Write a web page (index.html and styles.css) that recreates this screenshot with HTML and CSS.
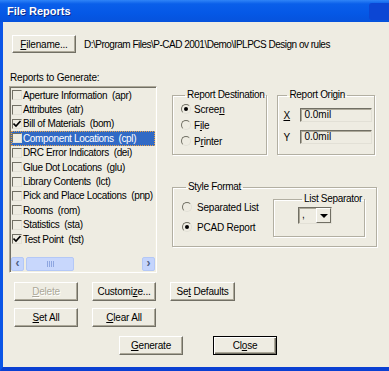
FILE: index.html
```html
<!DOCTYPE html>
<html lang="en">
<head>
  <meta charset="UTF-8">
  <title>File Reports</title>
  <link rel="stylesheet" href="styles.css">
</head>
<body>

  <div class="window">
    <div class="titlebar">
      <span class="title">File Reports</span>
      <span class="title-btn"></span>
    </div>

    <div class="client">
      <!-- Filename row -->
      <div class="file-row">
        <button class="btn btn-file"><u>F</u>ilename...</button>
        <span class="path">D:\Program Files\P-CAD 2001\Demo\IPLPCS Design ov rules</span>
      </div>

      <div class="main">
        <!-- Reports list -->
        <div class="left-col">
          <div class="list-label">Reports to Generate:</div>
          <div class="listbox">
            <div class="items" id="report-list"></div>
            <div class="hscroll">
              <span class="sb-btn">&#8249;</span>
              <span class="sb-thumb"><span class="grip"></span></span>
              <span class="sb-track"></span>
              <span class="sb-btn">&#8250;</span>
            </div>
          </div>
        </div>

        <!-- Options -->
        <div class="right-col">
          <div class="group-row">
            <fieldset class="group dest">
              <legend>Report Destination</legend>
              <label class="radio-row"><span class="radio on"></span><span>Scree<u>n</u></span></label>
              <label class="radio-row"><span class="radio"></span><span>F<u>i</u>le</span></label>
              <label class="radio-row"><span class="radio"></span><span>P<u>r</u>inter</span></label>
            </fieldset>

            <fieldset class="group origin">
              <legend>Report Origin</legend>
              <div class="coord-row">
                <span class="coord-label"><u>X</u></span>
                <span class="field">0.0mil</span>
              </div>
              <div class="coord-row">
                <span class="coord-label">Y</span>
                <span class="field">0.0mil</span>
              </div>
            </fieldset>
          </div>

          <fieldset class="group style">
            <legend>Style Format</legend>
            <div class="style-body">
              <div class="style-radios">
                <label class="radio-row tall"><span class="radio"></span><span>Separated List</span></label>
                <label class="radio-row tall"><span class="radio on"></span><span>PCAD Report</span></label>
              </div>
              <fieldset class="group sep">
                <legend>List Separator</legend>
                <div class="combo">
                  <span class="combo-value">,</span>
                  <span class="combo-btn"><span class="arrow"></span></span>
                </div>
              </fieldset>
            </div>
          </fieldset>
        </div>
      </div>

      <!-- Action buttons -->
      <div class="btn-row first">
        <button class="btn" disabled><u>D</u>elete</button>
        <button class="btn">Customi<u>z</u>e...</button>
        <button class="btn btn-wide">Se<u>t</u> Defaults</button>
      </div>
      <div class="btn-row">
        <button class="btn"><u>S</u>et All</button>
        <button class="btn"><u>C</u>lear All</button>
      </div>
      <div class="btn-row last">
        <button class="btn"><u>G</u>enerate</button>
        <button class="btn btn-default">Cl<u>o</u>se</button>
      </div>
    </div>
  </div>

  <script>
    const reports = [
      { name: "Aperture Information", ext: "apr", checked: false },
      { name: "Attributes", ext: "atr", checked: false },
      { name: "Bill of Materials", ext: "bom", checked: true },
      { name: "Component Locations", ext: "cpl", checked: false, selected: true },
      { name: "DRC Error Indicators", ext: "dei", checked: false },
      { name: "Glue Dot Locations", ext: "glu", checked: false },
      { name: "Library Contents", ext: "lct", checked: false },
      { name: "Pick and Place Locations", ext: "pnp", checked: false },
      { name: "Rooms", ext: "rom", checked: false },
      { name: "Statistics", ext: "sta", checked: false },
      { name: "Test Point", ext: "tst", checked: true }
    ];

    const list = document.getElementById("report-list");
    const tick = '<svg width="8" height="8" viewBox="0 0 8 8"><path d="M0.5 3.5 L3 6 L7.5 1" fill="none" stroke="#000" stroke-width="1.6"/></svg>';

    reports.forEach(r => {
      const item = document.createElement("div");
      item.className = "item" + (r.selected ? " selected" : "");
      item.innerHTML = `<span class="check">${r.checked ? tick : ""}</span><span class="item-text">${r.name}  (${r.ext})</span>`;
      list.appendChild(item);
    });
  </script>
</body>
</html>
```

FILE: styles.css
```css
body {
  margin: 0;
  overflow: hidden;
  font-family: 'Liberation Sans', Arial, sans-serif;
  font-size: 10px;
  color: #000;
}

.window {
  width: 392px;
  height: 371px;
  display: flex;
  flex-direction: column;
}

/* Title bar */
.titlebar {
  height: 22px;
  flex-shrink: 0;
  display: flex;
  align-items: center;
  justify-content: space-between;
  padding-left: 7px;
  background: linear-gradient(#2f84f7, #0a5fea 18%, #0558e6 60%, #0652dc);
}

.title {
  color: #fff;
  font-size: 11px;
  font-weight: bold;
  text-shadow: 1px 1px 0 #0a2c8c;
}

.title-btn {
  width: 22px;
  height: 17px;
  margin-right: 1px;
  border-radius: 3px;
  background: #0c46d4;
}

/* Client area */
.client {
  flex: 1;
  background: #eeece2;
  border-left: 3px solid #0b55e6;
  border-bottom: 4px solid #0a40d2;
  padding-left: 6px;
}

/* Buttons */
.btn {
  width: 64px;
  height: 19px;
  padding: 0;
  font-family: inherit;
  font-size: 10px;
  letter-spacing: -0.2px;
  color: #000;
  background: #eeece2;
  border: 1px solid;
  border-color: #fff #716f64 #716f64 #fff;
  box-shadow: inset -1px -1px 0 #aca899;
}

.btn:disabled {
  color: #aca899;
  text-shadow: 1px 1px 0 #fff;
}

.btn-wide {
  width: 65px;
}

.btn-default {
  border: 1px solid #000;
  box-shadow: inset 1px 1px 0 #fff, inset -1px -1px 0 #716f64, inset -2px -2px 0 #aca899;
}

.file-row {
  margin-top: 13px;
  padding-left: 3px;
  display: flex;
  align-items: center;
}

.btn-file {
  height: 18px;
}

.path {
  margin-left: 8px;
  letter-spacing: -0.5px;
  white-space: nowrap;
}

/* Main area */
.main {
  display: flex;
  margin-top: 19px;
}

.left-col {
  width: 148px;
}

.list-label {
  height: 12px;
  line-height: 12px;
  padding-left: 1px;
  letter-spacing: -0.2px;
}

.listbox {
  margin-top: 2px;
  height: 187px;
  box-sizing: border-box;
  border: 1px solid;
  border-color: #aca899 #fff #fff #aca899;
  box-shadow: inset 1px 1px 0 #716f64, inset -1px -1px 0 #f1efe2;
  padding: 1px;
  display: flex;
  flex-direction: column;
}

.item {
  height: 14.4px;
  display: flex;
  align-items: center;
  white-space: pre;
  letter-spacing: -0.35px;
}

.item.selected {
  background: #316ac5;
  color: #fff;
  outline: 1px dotted #e8a248;
  outline-offset: -1px;
}

.check {
  width: 10px;
  height: 10px;
  box-sizing: border-box;
  margin: 0 1px 0 1px;
  border: 1px solid;
  border-color: #716f64 #e2e0d6 #e2e0d6 #716f64;
  background: #eeece2;
  display: flex;
  align-items: center;
  justify-content: center;
}

.hscroll {
  margin-top: auto;
  height: 14px;
  display: flex;
  align-items: stretch;
}

.sb-btn {
  width: 13px;
  box-sizing: border-box;
  border: 1px solid #b4c8f6;
  border-radius: 2px;
  background: #c4d4fc;
  color: #4d6185;
  font-size: 12px;
  font-weight: bold;
  line-height: 11px;
  text-align: center;
}

.sb-thumb {
  width: 48px;
  margin-left: 2px;
  box-sizing: border-box;
  border: 1px solid #b4c8f6;
  border-radius: 2px;
  background: #c8d7fc;
  display: flex;
  align-items: center;
  justify-content: center;
}

.grip {
  width: 7px;
  height: 6px;
  background: repeating-linear-gradient(90deg, #8ea6e0 0 1px, transparent 1px 2px);
}

.sb-track {
  flex: 1;
}

/* Option groups */
.right-col {
  margin-left: 15px;
  margin-top: 17px;
}

.group {
  margin: 0;
  border: 1px solid #b2afa2;
  box-shadow: 1px 1px 0 #fff, inset 1px 1px 0 #fff;
}

.group legend {
  padding: 0 2px;
  margin-left: 4px;
  line-height: 12px;
  letter-spacing: -0.3px;
  white-space: nowrap;
}

.group-row {
  display: flex;
  gap: 10px;
}

.dest {
  width: 93px;
  box-sizing: border-box;
  padding: 0 0 5px 8px;
}

.radio-row {
  height: 16px;
  display: flex;
  align-items: center;
  gap: 3px;
  letter-spacing: -0.2px;
}

.radio-row.tall {
  height: 20px;
  gap: 5px;
}

.radio {
  width: 10px;
  height: 10px;
  box-sizing: border-box;
  border-radius: 50%;
  border: 1px solid;
  border-color: #716f64 #e2e0d6 #e2e0d6 #716f64;
  display: flex;
  align-items: center;
  justify-content: center;
}

.radio.on::after {
  content: "";
  width: 4px;
  height: 4px;
  border-radius: 50%;
  background: #000;
}

.origin {
  width: 98px;
  box-sizing: border-box;
  padding: 7px 0 6px 5px;
}

.coord-row {
  display: flex;
  align-items: center;
  height: 14px;
}

.coord-row + .coord-row {
  margin-top: 8px;
}

.coord-label {
  width: 17px;
}

.field {
  width: 72px;
  height: 14px;
  box-sizing: border-box;
  border: 1px solid;
  border-color: #716f64 #e2e0d6 #e2e0d6 #716f64;
  box-shadow: inset 1px 1px 0 #aca899;
  padding-left: 3px;
  line-height: 12px;
}

.style {
  width: 205px;
  box-sizing: border-box;
  margin-top: 26px;
  padding: 0 0 9px 9px;
}

.style-body {
  display: flex;
}

.style-radios {
  width: 91px;
  padding-top: 4px;
}

.sep {
  width: 78px;
  box-sizing: border-box;
  padding: 2px 0 11px 24px;
}

.combo {
  width: 34px;
  height: 17px;
  box-sizing: border-box;
  border: 1px solid;
  border-color: #716f64 #e2e0d6 #e2e0d6 #716f64;
  box-shadow: inset 1px 1px 0 #aca899;
  display: flex;
}

.combo-value {
  flex: 1;
  padding-left: 3px;
  line-height: 13px;
}

.combo-btn {
  width: 15px;
  box-sizing: border-box;
  border: 1px solid;
  border-color: #fff #716f64 #716f64 #fff;
  display: flex;
  align-items: center;
  justify-content: center;
}

.arrow {
  border-left: 4px solid transparent;
  border-right: 4px solid transparent;
  border-top: 4px solid #000;
}

/* Bottom button rows */
.btn-row {
  display: flex;
  gap: 14px;
  padding-left: 5px;
  margin-top: 7px;
}

.btn-row.first {
  margin-top: 9px;
}

.btn-row.last {
  margin-top: 9px;
  padding-left: 110px;
  gap: 30px;
}
```
